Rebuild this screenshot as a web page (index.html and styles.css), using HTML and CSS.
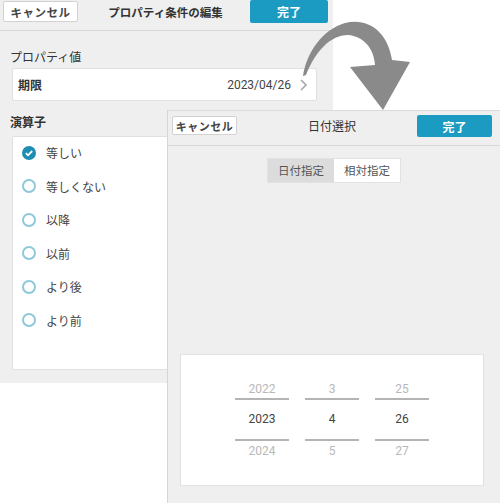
FILE: index.html
```html
<!DOCTYPE html>
<html lang="ja">
<head>
<meta charset="utf-8">
<title>プロパティ条件の編集</title>
<link rel="stylesheet" href="styles.css">
</head>
<body>
  <div class="stage">
    <!-- condition editor -->
    <section class="screen edit">
      <header class="bar bar-edit">
        <button class="btn-cancel">キャンセル</button>
        <h1 class="bar-title">プロパティ条件の編集</h1>
        <button class="btn-done">完了</button>
      </header>
      <div class="body">
        <div class="label label-prop">プロパティ値</div>
        <div class="prop-row">
          <span class="prop-name">期限</span>
          <span class="prop-value">2023/04/26</span>
          <svg class="chev" width="7" height="12" viewBox="0 0 7 12"><path d="M1 1l5 5-5 5" fill="none" stroke="#a8a8a8" stroke-width="1.6"/></svg>
        </div>
        <div class="label label-op">演算子</div>
        <ul class="ops">
          <li class="op"><span class="radio on"><svg width="14" height="14" viewBox="0 0 14 14"><circle cx="7" cy="7" r="7" fill="#1d8db4"/><path d="M3.8 7.2l2.2 2.1 4.2-4.3" fill="none" stroke="#fff" stroke-width="1.8"/></svg></span>等しい</li>
          <li class="op"><span class="radio"></span>等しくない</li>
          <li class="op"><span class="radio"></span>以降</li>
          <li class="op"><span class="radio"></span>以前</li>
          <li class="op"><span class="radio"></span>より後</li>
          <li class="op"><span class="radio"></span>より前</li>
        </ul>
      </div>
    </section>

    <!-- date picker sheet -->
    <section class="screen picker-screen">
      <header class="bar bar-pick">
        <button class="btn-cancel small">キャンセル</button>
        <h1 class="bar-title">日付選択</h1>
        <button class="btn-done">完了</button>
      </header>
      <div class="seg">
        <span class="seg-item active">日付指定</span>
        <span class="seg-item">相対指定</span>
      </div>
      <div class="wheel-card">
        <div class="wheel">
          <div class="cell prev">2022</div>
          <div class="cell cur">2023</div>
          <div class="cell next">2024</div>
        </div>
        <div class="wheel">
          <div class="cell prev">3</div>
          <div class="cell cur">4</div>
          <div class="cell next">5</div>
        </div>
        <div class="wheel">
          <div class="cell prev">25</div>
          <div class="cell cur">26</div>
          <div class="cell next">27</div>
        </div>
      </div>
    </section>

    <!-- transition arrow between the two sheets -->
    <svg class="flow-arrow" width="500" height="503" viewBox="0 0 500 503">
      <path d="M303 76 C307 52 322 30 345 23 C368 17 388 32 392 60 L410 62 L383 110 L350 67 L375 65 C374 48 363 36 348 35 C330 35 315 52 306 75 Z" fill="#8a8a8a"/>
    </svg>
  </div>
</body>
</html>
```

FILE: styles.css
```css
* { box-sizing: border-box; margin: 0; padding: 0; }

html, body {
  width: 500px;
  height: 503px;
  background: #fff;
  overflow: hidden;
}

body {
  font-family: "Noto Sans CJK JP", "Noto Sans", Roboto, sans-serif;
  color: #3a3a3a;
  font-size: 12px;
}

.stage {
  position: relative;
  width: 500px;
  height: 503px;
}

.screen {
  background: #efefef;
}

/* ---------- condition editor ---------- */
.edit {
  width: 333px;
  height: 383px;
}

.bar {
  display: grid;
  grid-template-columns: 1fr auto 1fr;
  align-items: start;
  border-bottom: 1px solid #d8d8d8;
}

.bar-edit {
  height: 31px;
  padding: 1px 5px 0 3px;
}

.bar-title {
  font-size: 11.5px;
  font-weight: 700;
  color: #333;
  line-height: 22px;
}

.btn-cancel {
  justify-self: start;
  width: 75px;
  height: 21px;
  background: #fff;
  border: 1px solid #d2d2d2;
  border-radius: 2px;
  font: inherit;
  font-size: 11.5px;
  font-weight: 700;
  color: #444;
  letter-spacing: 0.5px;
}

.btn-done {
  justify-self: end;
  width: 78px;
  height: 23px;
  margin-top: -1px;
  background: #1b9bc1;
  border: 0;
  border-radius: 2px;
  font: inherit;
  font-size: 12px;
  font-weight: 700;
  color: #fff;
}

.body {
  padding: 0 16px 0 12px;
}

.label {
  font-size: 12px;
  line-height: 16px;
  color: #333;
  margin-left: -2px;
}

.label-prop { margin-top: 18px; }
.label-op { margin-top: 13px; font-weight: 700; }

.prop-row {
  display: flex;
  align-items: center;
  height: 33px;
  margin-top: 3px;
  padding: 0 9px 0 5px;
  background: #fff;
  border: 1px solid #e0e0e0;
  border-radius: 2px;
}

.prop-name {
  font-weight: 700;
  color: #333;
  flex: 1;
}

.prop-value {
  font-family: Roboto, "Noto Sans", sans-serif;
  font-size: 12px;
  color: #444;
  margin-right: 9px;
}

.chev { display: block; }

.ops {
  list-style: none;
  height: 234px;
  margin-top: 6px;
  background: #fff;
  border: 1px solid #e0e0e0;
  border-radius: 2px;
}

.op {
  display: flex;
  align-items: center;
  gap: 10px;
  height: 33.5px;
  padding-left: 9px;
  font-size: 12px;
  color: #444;
}

.op:first-child { margin-top: -1px; }

.radio {
  display: block;
  width: 14px;
  height: 14px;
  border-radius: 50%;
  border: 2px solid #8dc9da;
}

.radio.on {
  border: 0;
}

.radio svg { display: block; }

/* ---------- date picker sheet ---------- */
.picker-screen {
  position: absolute;
  left: 167px;
  top: 110px;
  width: 333px;
  height: 393px;
  border-left: 1px solid #d6d6d6;
  border-top: 1px solid #dcdcdc;
  display: flex;
  flex-direction: column;
  align-items: center;
}

.bar-pick {
  width: 100%;
  height: 35px;
  padding: 4px 8px 0 4px;
}

.bar-pick .bar-title {
  font-weight: 400;
  font-size: 12px;
  line-height: 22px;
  color: #333;
}

.bar-pick .btn-done {
  width: 75px;
  height: 22px;
  margin-top: 0;
}

.btn-cancel.small {
  width: 65px;
  height: 19px;
  margin-top: 1px;
  font-size: 11px;
}

.seg {
  display: flex;
  margin-top: 12px;
  height: 25px;
  background: #fff;
  border: 1px solid #e2e2e2;
}

.seg-item {
  width: 66px;
  line-height: 23px;
  text-align: center;
  font-size: 11.5px;
  color: #555;
}

.seg-item.active {
  background: #dcdcdc;
}

.wheel-card {
  display: flex;
  justify-content: center;
  gap: 16px;
  width: 304px;
  height: 132px;
  margin-top: 171px;
  margin-left: -4px;
  background: #fff;
  border: 1px solid #e2e2e2;
}

.wheel {
  width: 54px;
  text-align: center;
  font-family: Roboto, "Noto Sans", sans-serif;
  font-size: 12px;
}

.cell {
  line-height: 16px;
  color: #b8b8b8;
}

.cell.prev {
  margin-top: 26px;
  padding-bottom: 1px;
  border-bottom: 2px solid #b4b4b4;
}

.cell.cur {
  line-height: 39px;
  color: #444;
  border-bottom: 2px solid #b4b4b4;
}

.cell.next {
  margin-top: 2px;
}

/* ---------- arrow overlay ---------- */
.flow-arrow {
  position: absolute;
  left: 0;
  top: 0;
  pointer-events: none;
}
```
